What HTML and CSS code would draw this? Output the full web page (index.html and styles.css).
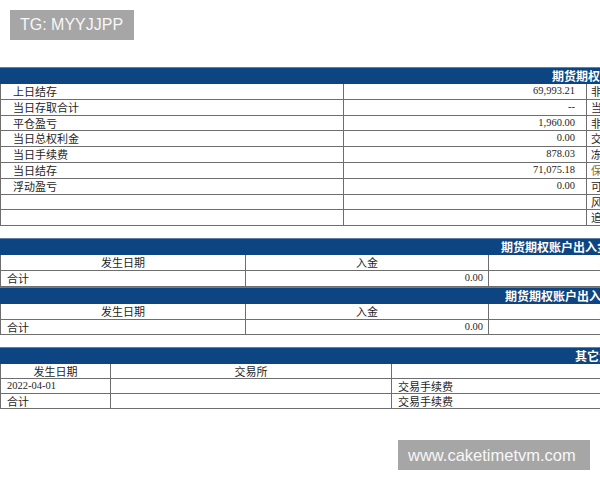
FILE: index.html
```html
<!DOCTYPE html>
<html lang="zh">
<head>
<meta charset="utf-8">
<link rel="stylesheet" href="styles.css">
</head>
<body>
<div class="page">
  <table class="grid t1">
    <colgroup><col class="c343"><col class="c243"><col class="crest"></colgroup>
    <tr><th colspan="3" class="head h1">期货期权账户资金状况</th></tr>
    <tr><td class="lbl">上日结存</td><td class="num">69,993.21</td><td class="r3">非货币充抵金额</td></tr>
    <tr><td class="lbl">当日存取合计</td><td class="num">--</td><td class="r3">当日保证金占用</td></tr>
    <tr><td class="lbl">平仓盈亏</td><td class="num">1,960.00</td><td class="r3">非货币充抵金额</td></tr>
    <tr><td class="lbl">当日总权利金</td><td class="num">0.00</td><td class="r3">交割保证金</td></tr>
    <tr><td class="lbl">当日手续费</td><td class="num">878.03</td><td class="r3">冻结资金</td></tr>
    <tr><td class="lbl">当日结存</td><td class="num">71,075.18</td><td class="r3 warn">保证金追加</td></tr>
    <tr><td class="lbl">浮动盈亏</td><td class="num">0.00</td><td class="r3">可用资金</td></tr>
    <tr><td class="lbl"></td><td class="num"></td><td class="r3">风险度</td></tr>
    <tr><td class="lbl"></td><td class="num"></td><td class="r3">追加保证金</td></tr>
  </table>

  <table class="grid t2">
    <colgroup><col class="c245"><col class="c243"><col class="c243"><col class="crest"></colgroup>
    <tr><th colspan="4" class="head h2">期货期权账户出入金明细</th></tr>
    <tr><td class="ctr">发生日期</td><td class="ctr">入金</td><td class="ctr faint">出金</td><td class="ctr">说明</td></tr>
    <tr><td class="sm">合计</td><td class="num n2">0.00</td><td class="num n2"></td><td></td></tr>
  </table>
  <table class="grid t2">
    <colgroup><col class="c245"><col class="c243"><col class="c243"><col class="crest"></colgroup>
    <tr><th colspan="4" class="head h3">期货期权账户出入金明细</th></tr>
    <tr><td class="ctr">发生日期</td><td class="ctr">入金</td><td class="ctr faint">出金</td><td class="ctr">说明</td></tr>
    <tr><td class="sm">合计</td><td class="num n2">0.00</td><td class="num n2"></td><td></td></tr>
  </table>

  <table class="grid t4">
    <colgroup><col class="c110"><col class="c281"><col class="crest"></colgroup>
    <tr><th colspan="3" class="head h4">其它资金明细</th></tr>
    <tr><td class="ctr">发生日期</td><td class="ctr">交易所</td><td class="ctr"></td></tr>
    <tr><td class="sm date">2022-04-01</td><td></td><td class="sm">交易手续费</td></tr>
    <tr><td class="sm">合计</td><td></td><td class="sm">交易手续费</td></tr>
  </table>
</div>

<div class="badge badge-tg">TG: MYYJJPP</div>
<div class="badge badge-site">www.caketimetvm.com</div>
</body>
</html>
```

FILE: styles.css
```css
html, body {
  margin: 0;
  padding: 0;
  width: 600px;
  height: 480px;
  overflow: hidden;
  background: #ffffff;
}

body {
  position: relative;
  font-family: "Noto Sans CJK SC", "Noto Sans", sans-serif;
  color: #1e1e1e;
}

.page {
  padding-top: 67px;
  display: flex;
  flex-direction: column;
  width: 1200px;
}

.grid {
  border-collapse: collapse;
  table-layout: fixed;
  width: 1100px;
  font-size: 11px;
}

.t1 { margin-bottom: 12px; }
.t4 { margin-top: 12px; }

.c343 { width: 343px; }
.c243 { width: 243px; }
.c245 { width: 245px; }
.c110 { width: 110px; }
.c281 { width: 281px; }

.grid td {
  border: 1px solid #6e6e6e;
  height: 14.8px;
  padding: 0 6px;
  line-height: 14.8px;
  white-space: nowrap;
  overflow: hidden;
  background: #ffffff;
}

.t4 td {
  height: 14px;
  line-height: 14px;
}

.head {
  background: #0c4581;
  color: #ffffff;
  font-weight: bold;
  font-size: 12px;
  height: 15px;
  line-height: 15px;
  padding: 0;
  text-align: left;
  white-space: nowrap;
  border: 1px solid #0c4581;
  border-top-color: #5d7fa8;
}

.h1 { padding-left: 551px; }
.h2 { padding-left: 500px; }
.h3 { padding-left: 504px; }
.h4 { padding-left: 574px; }

.lbl { padding-left: 12px !important; }

.num {
  text-align: right;
  font-family: "Liberation Serif", "Times New Roman", serif;
  font-size: 10.5px;
  padding-right: 11px !important;
}

.n2 { padding-right: 5px !important; }

.r3 { padding-left: 4px !important; }
.warn { color: #8a6a2a; }

.ctr { text-align: center; }
.faint { color: #c8c8c8; }

.sm { padding-left: 6px !important; }

.date {
  font-family: "Liberation Serif", "Times New Roman", serif;
  font-size: 10.5px;
}

.badge {
  position: absolute;
  background: #a6a6a6;
  color: #f7f7f7;
  font-family: "Liberation Sans", Arial, sans-serif;
  height: 30px;
  line-height: 30px;
  box-sizing: border-box;
  white-space: nowrap;
}

.badge-tg {
  left: 10px;
  top: 10px;
  width: 124px;
  padding-left: 10px;
  font-size: 16px;
}

.badge-site {
  left: 398px;
  top: 440px;
  width: 192px;
  padding-left: 10px;
  font-size: 16.5px;
}
```
